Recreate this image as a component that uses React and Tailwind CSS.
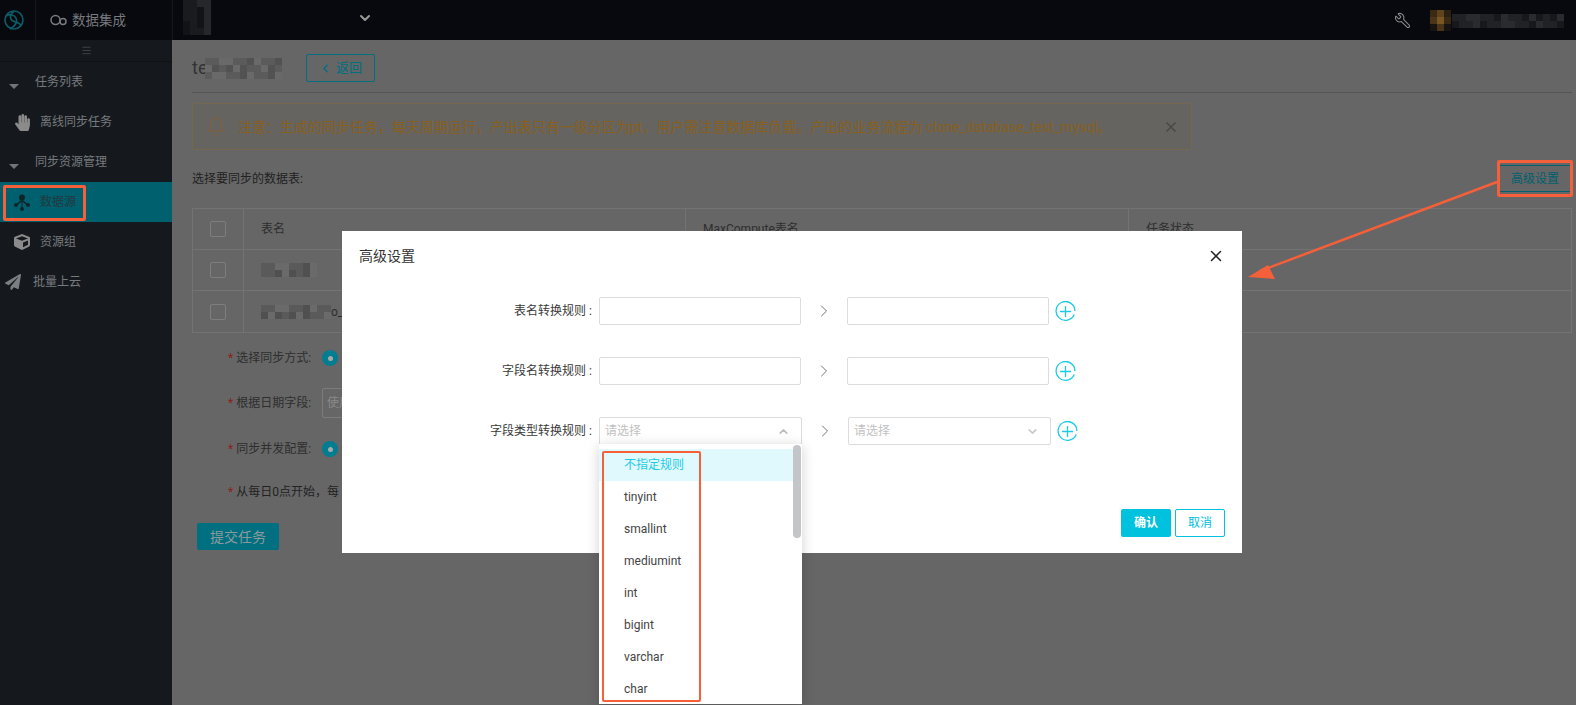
import React from 'react';
import { Bell, ChevronDown, ChevronLeft, ChevronRight, ChevronUp, Menu, Wrench, X } from 'lucide-react';
import { FaCube, FaHandPaper, FaPaperPlane } from 'react-icons/fa';

const font = 'font-["Roboto","Noto_Sans_CJK_SC",sans-serif]';

const Mosaic = ({ colors, cols, size = 7 }) => (
  <div className="grid" style={{ gridTemplateColumns: `repeat(${cols}, ${size}px)`, gridAutoRows: `${size}px` }}>
    {colors.map((c, i) => (
      <div key={i} style={{ background: c }} />
    ))}
  </div>
);

const strip = (cols, rows, a, b, c) =>
  Array.from({ length: cols * rows }, (_, i) => [a, b, c, a, c, b, a][(i * 5 + (i % 3)) % 7]);

const Logo = () => (
  <svg width="22" height="22" viewBox="0 0 22 22" fill="none" stroke="#0a5d69" strokeWidth="1.6">
    <circle cx="11" cy="11" r="9" />
    <path d="M11 2c-4 3-5 8-1 10s7 1 8 5" />
    <path d="M3 7c3-2 8-2 10 2s-1 8-6 11" />
  </svg>
);

const Caret = () => (
  <svg width="10" height="5" viewBox="0 0 10 5" className="shrink-0">
    <path d="M0 0h10L5 5z" fill="#70757a" />
  </svg>
);

const NodesIcon = () => (
  <svg width="16" height="17" viewBox="0 0 16 17" fill="#10252b">
    <circle cx="8" cy="3.5" r="3" />
    <circle cx="2" cy="11" r="2" />
    <circle cx="14" cy="11" r="2" />
    <circle cx="8" cy="15" r="2" />
    <path d="M7.4 5h1.2v10H7.4zM7 6l1 1.2L3 11.6 2 10.6zM9 6 8 7.2l5 4.4 1-1z" />
  </svg>
);

const PlusCircle = () => (
  <svg width="21" height="21" viewBox="0 0 21 21" fill="none" stroke="#1ccbe6" strokeWidth="1.3" className="shrink-0">
    <path d="M19.2 13.5A9.4 9.4 0 1 1 19.9 10" />
    <path d="M10.5 5v11M5 10.5h11" />
  </svg>
);

const Annotation = ({ className }) => (
  <div className={`absolute border-[#f55f3a] rounded-[2px] ${className}`} />
);

const SideItem = ({ icon, children, active }) => (
  <div className={`h-10 flex items-center text-xs ${active ? 'bg-[#00606e] text-[#23393f]' : 'text-[#777a7e]'}`}>
    <span className="w-10 flex justify-center pl-1">{icon}</span>
    {children}
  </div>
);

const SideGroup = ({ children }) => (
  <div className="h-10 flex items-center text-xs text-[#777a7e] pl-[9px] gap-[16px]">
    <span className="mt-2"><Caret /></span>
    {children}
  </div>
);

const FormRow = ({ label, className, children }) => (
  <div className={`flex items-center pl-9 text-xs text-[#2e2e2e] ${className}`}>
    <span className="w-[94px] whitespace-nowrap"><span className="text-[#8f1f1f] mr-[3px]">*</span>{label}</span>
    {children}
  </div>
);

const Radio = () => (
  <span className="w-4 h-4 rounded-full bg-[#007d90] flex items-center justify-center">
    <span className="w-[5px] h-[5px] rounded-full bg-[#a8a8a8]" />
  </span>
);

const Checkbox = () => (
  <span className="w-4 h-4 border border-[#7e7e7e] rounded-[2px]" />
);

const TableRow = ({ first, second, third, last }) => (
  <div className={`h-[41px] flex text-xs text-[#2e2e2e] ${last ? '' : 'border-b border-[#737373]'}`}>
    <div className="w-[51px] flex items-center justify-center border-r border-[#737373]"><Checkbox /></div>
    <div className="w-[442px] flex items-center pl-[17px] border-r border-[#737373]">{first}</div>
    <div className="w-[443px] flex items-center pl-[17px] border-r border-[#737373]">{second}</div>
    <div className="flex-1 flex items-center pl-[17px]">{third}</div>
  </div>
);

const Field = () => (
  <div className="w-[202px] h-7 border border-[#dcdcdc] rounded-[2px] bg-white" />
);

const SelectBox = ({ open, children }) => (
  <div className="relative w-[203px] h-7 border border-[#dcdcdc] rounded-[2px] bg-white flex items-center justify-between pl-[5px] pr-[11px] text-xs text-[#c2c2c2]">
    请选择
    {open ? <ChevronUp size={13} strokeWidth={3} color="#bdbdbd" /> : <ChevronDown size={13} strokeWidth={3} color="#c8c8c8" />}
    {children}
  </div>
);

const RuleRow = ({ label, left, right }) => (
  <div className="flex items-center h-7">
    <div className="w-[250px] text-right text-xs text-[#3a3a3a] mr-[7px] whitespace-nowrap">{label}&nbsp;:</div>
    {left}
    <div className="w-[46px] flex justify-center shrink-0">
      <ChevronRight size={20} strokeWidth={1} color="#555" />
    </div>
    {right}
    <div className="ml-[6px]"><PlusCircle /></div>
  </div>
);

const typeOptions = ['tinyint', 'smallint', 'mediumint', 'int', 'bigint', 'varchar', 'char'];

const App = () => {
  return (
    <div className={`relative w-[1576px] h-[705px] overflow-hidden bg-[#666666] ${font}`}>
      <header className="h-10 bg-[#07090e] flex items-stretch">
        <div className="w-9 flex items-center pl-[3px] border-r border-[#15181d]"><Logo /></div>
        <div className="w-[137px] flex items-center pl-[14px] gap-[5px] text-[13.5px] text-[#777a7e] border-r border-[#15181d]">
          <svg width="17" height="12" viewBox="0 0 17 12" fill="none" stroke="#777a7e" strokeWidth="1.5">
            <circle cx="5.5" cy="6" r="4.5" />
            <circle cx="13" cy="7.5" r="3" />
          </svg>
          数据集成
        </div>
        <div className="w-[203px] flex items-start justify-between pl-[10px] pr-[3px]">
          <Mosaic cols={4} size={7} colors={strip(4, 5, '#1a1b1e', '#26272a', '#121316')} />
          <span className="mt-[10px] text-[#9a9a9a]"><ChevronDown size={16} strokeWidth={3} /></span>
        </div>
        <div className="flex-1 flex items-center justify-end pr-3">
          <Wrench size={17} strokeWidth={1.5} color="#8a8a8a" className="-scale-x-100 mr-[19px]" />
          <Mosaic cols={3} size={7} colors={['#3a2a14', '#5e431c', '#2b2112', '#4a3518', '#7a5722', '#3a2a14', '#171310', '#4a3518', '#171310']} />
          <div className="ml-[1px] mt-[2px]">
            <Mosaic cols={16} size={7} colors={strip(16, 2, '#212226', '#2a2b2f', '#17181c')} />
          </div>
        </div>
      </header>

      <div className="flex h-[665px]">
        <aside className="w-[172px] shrink-0 bg-[#15191d]">
          <div className="h-[22px] flex items-center justify-center border-b border-[#101316] text-[#4e5256]">
            <Menu size={11} strokeWidth={1.5} />
          </div>
          <SideGroup>任务列表</SideGroup>
          <SideItem icon={<FaHandPaper size={17} color="#8b8b8b" />}>离线同步任务</SideItem>
          <SideGroup>同步资源管理</SideGroup>
          <SideItem active icon={<NodesIcon />}>数据源</SideItem>
          <SideItem icon={<FaCube size={16} color="#8b8b8b" />}>资源组</SideItem>
          <div className="h-10 flex items-center gap-3 pl-[5px] text-xs text-[#777a7e]">
            <FaPaperPlane size={16} color="#7c7f82" />
            批量上云
          </div>
        </aside>

        <main className="flex-1 pl-5 pr-1">
          <div className="border-b border-[#555555]">
            <div className="flex items-center h-7 mt-[14px] mb-[10px]">
              <span className="text-lg text-[#333333] w-[13px] overflow-visible">te</span>
              <Mosaic cols={11} size={7} colors={strip(11, 3, '#5b5b5b', '#696969', '#525252')} />
              <button className="ml-6 w-[69px] h-7 border border-[#00707f] rounded-[2px] flex items-center justify-center gap-1 text-[13px] text-[#00707f]">
                <ChevronLeft size={13} strokeWidth={2.5} />
                返回
              </button>
            </div>
          </div>

          <div className="mt-[10px] h-[47px] w-[1000px] rounded-[3px] border border-[#75684f] bg-[#666460] flex items-center pl-[13px] pr-[12px] text-sm text-[#87601f]">
            <Bell size={21} strokeWidth={1} color="#8a5f30" className="shrink-0" />
            <span className="ml-[11px] flex-1 whitespace-nowrap">注意：生成的同步任务，每天周期运行，产出表只有一级分区为pt，用户需注意数据库负载。产出的业务流程为 clone_database_test_mysql。</span>
            <X size={16} strokeWidth={2.5} color="#4a4a4a" />
          </div>

          <div className="mt-[15px] h-[27px] flex items-center justify-between text-xs">
            <span className="text-[#222222] pt-[1px]">选择要同步的数据表:</span>
            <button className="mr-[2px] w-[70px] h-[27px] border-y border-[#00606e] text-[#00606e]">高级设置</button>
          </div>

          <div className="mt-4 border border-[#737373]">
            <TableRow first="表名" second="MaxCompute表名" third="任务状态" />
            <TableRow first={<Mosaic cols={8} size={7} colors={strip(8, 2, '#5a5a5a', '#6a6a6a', '#505050')} />} />
            <TableRow last first={<><Mosaic cols={10} size={7} colors={strip(10, 2, '#5a5a5a', '#6a6a6a', '#505050')} /><span>o_c</span></>} />
          </div>

          <FormRow label="选择同步方式:" className="h-[30px] mt-[10px]"><Radio /></FormRow>
          <FormRow label="根据日期字段:" className="h-[30px] mt-[15px]">
            <div className="w-[200px] h-[30px] border border-[#7c7c7c] rounded-[2px] pl-[4px] flex items-center text-[#8a8a8a]">使用</div>
          </FormRow>
          <FormRow label="同步并发配置:" className="h-[30px] mt-[16px]"><Radio /></FormRow>
          <div className="pl-9 mt-[13px] text-xs text-[#222222] h-[30px] flex items-center whitespace-nowrap">
            <span className="text-[#8f1f1f] mr-[3px]">*</span>从每日0点开始，每
          </div>
          <button className="ml-[5px] mt-[16px] w-[82px] h-[27px] rounded-[2px] bg-[#006f80] text-sm text-[#8a9a9c]">提交任务</button>
        </main>
      </div>

      {/* modal */}
      <div className="absolute left-[342px] top-[231px] w-[900px] h-[322px] bg-white flex flex-col">
        <div className="h-[50px] mt-0 flex items-center justify-between pl-[17px] pr-[17px] text-sm text-[#333333]">
          高级设置
          <X size={18} strokeWidth={2} color="#222222" />
        </div>
        <div className="mt-4 flex flex-col gap-8">
          <RuleRow label="表名转换规则" left={<Field />} right={<Field />} />
          <RuleRow label="字段名转换规则" left={<Field />} right={<Field />} />
          <RuleRow
            label="字段类型转换规则"
            left={
              <SelectBox open>
                <div className="absolute left-[-1px] top-full w-[203px] h-[260px] bg-white shadow-[0_2px_12px_rgba(0,0,0,0.18)] pt-[5px] overflow-hidden z-10">
                  <div className="h-8 w-[194px] bg-[#e0f9fd] text-[#1ccbe6] flex items-center pl-[25px]">不指定规则</div>
                  {typeOptions.map((opt) => (
                    <div key={opt} className="h-8 flex items-center pl-[25px] text-[#444444]">{opt}</div>
                  ))}
                  <div className="absolute right-[1px] top-[1px] w-2 h-[93px] rounded bg-[#c4c5c9]" />
                </div>
              </SelectBox>
            }
            right={<SelectBox />}
          />
        </div>
        <div className="mt-auto mb-4 mr-[17px] flex justify-end gap-1 text-xs">
          <button className="w-[50px] h-7 rounded-[2px] bg-[#00c1de] text-white font-bold">确认</button>
          <button className="w-[50px] h-7 rounded-[2px] border border-[#00c1de] text-[#00c1de]">取消</button>
        </div>
      </div>

      {/* annotations drawn on top of the screenshot */}
      <Annotation className="left-[3px] top-[185px] w-[83px] h-[36px] border-[3px]" />
      <Annotation className="left-[1497px] top-[160px] w-[76px] h-[37px] border-[3px]" />
      <Annotation className="left-[602px] top-[451px] w-[99px] h-[251px] border-[2px] z-20" />
      <svg className="absolute left-[1240px] top-[175px] pointer-events-none" width="265" height="110" viewBox="0 0 265 110">
        <path d="M257 7 20 96" stroke="#f55f3a" strokeWidth="2.5" />
        <path d="M8 102 28 90l7 14z" fill="#f55f3a" />
      </svg>
    </div>
  );
};

export default App;
